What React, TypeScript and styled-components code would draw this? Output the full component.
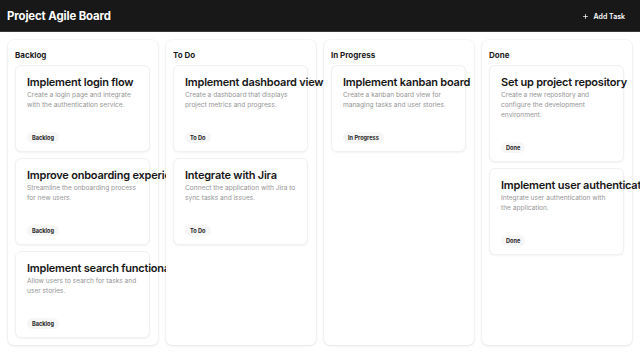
import React from 'react';
import styled, { createGlobalStyle } from 'styled-components';

const GlobalStyle = createGlobalStyle`
  html, body {
    margin: 0;
    padding: 0;
    background: #ffffff;
    font-family: Inter, "Noto Sans", sans-serif;
  }
  * {
    box-sizing: border-box;
  }
`;

const Page = styled.div`
  display: flex;
  flex-direction: column;
  height: 353px;
  width: 640px;
  overflow: hidden;
`;

const Header = styled.header`
  display: flex;
  justify-content: space-between;
  align-items: center;
  height: 32px;
  padding: 0 15px 0 7px;
  background: #181818;
  border-bottom: 1px solid #3a3a3a;
  flex-shrink: 0;
`;

const Title = styled.h1`
  margin: 0;
  font-size: 11.4px;
  font-weight: 700;
  letter-spacing: -0.01em;
  color: #ffffff;
`;

const AddButton = styled.button`
  display: flex;
  align-items: center;
  gap: 5px;
  padding: 0;
  border: none;
  background: transparent;
  color: #ffffff;
  font-family: inherit;
  font-size: 7px;
  font-weight: 600;
  margin-top: 2px;
  cursor: pointer;
`;

const Board = styled.main`
  display: flex;
  gap: 8px;
  flex: 1;
  padding: 8px;
  min-height: 0;
`;

const Column = styled.section`
  display: flex;
  flex-direction: column;
  width: 150px;
  flex-shrink: 0;
  padding: 8px 8px 8px 7px;
  background: #ffffff;
  border-radius: 6px;
  box-shadow: 0 1px 3px rgba(0, 0, 0, 0.09), 0 0 0 1px rgba(0, 0, 0, 0.025);
`;

const ColumnTitle = styled.h2`
  margin: 0 0 3px;
  font-size: 8px;
  line-height: 14px;
  font-weight: 700;
  color: #1c1c1c;
`;

const CardList = styled.div`
  display: flex;
  flex-direction: column;
  gap: 6px;
`;

const Card = styled.article`
  display: flex;
  flex-direction: column;
  align-items: flex-start;
  padding: 9px 11px 8px;
  background: #ffffff;
  border: 1px solid #f1f1f1;
  border-radius: 6px;
  box-shadow: 0 1px 2px rgba(0, 0, 0, 0.05);
`;

const CardTitle = styled.h3`
  margin: 0;
  font-size: 11px;
  line-height: 15px;
  font-weight: 600;
  letter-spacing: -0.02em;
  white-space: nowrap;
  color: #161616;
`;

const CardText = styled.p`
  margin: 0;
  max-width: 111px;
  font-size: 6.6px;
  line-height: 10px;
  color: #959595;
`;

const Badge = styled.span`
  display: inline-flex;
  align-items: center;
  height: 11px;
  margin-top: 22px;
  padding: 0 5px;
  border-radius: 6px;
  background: #f6f6f6;
  font-size: 5.6px;
  font-weight: 700;
  color: #262626;
`;

interface Task {
  title: string;
  text: string;
}

interface ColumnData {
  name: string;
  tasks: Task[];
}

const columns: ColumnData[] = [
  {
    name: 'Backlog',
    tasks: [
      { title: 'Implement login flow', text: 'Create a login page and integrate with the authentication service.' },
      { title: 'Improve onboarding experience', text: 'Streamline the onboarding process for new users.' },
      { title: 'Implement search functionality', text: 'Allow users to search for tasks and user stories.' },
    ],
  },
  {
    name: 'To Do',
    tasks: [
      { title: 'Implement dashboard view', text: 'Create a dashboard that displays project metrics and progress.' },
      { title: 'Integrate with Jira', text: 'Connect the application with Jira to sync tasks and issues.' },
    ],
  },
  {
    name: 'In Progress',
    tasks: [
      { title: 'Implement kanban board', text: 'Create a kanban board view for managing tasks and user stories.' },
    ],
  },
  {
    name: 'Done',
    tasks: [
      { title: 'Set up project repository', text: 'Create a new repository and configure the development environment.' },
      { title: 'Implement user authentication', text: 'Integrate user authentication with the application.' },
    ],
  },
];

const PlusIcon = () => (
  <svg width="7" height="7" viewBox="0 0 24 24" fill="none" stroke="currentColor" strokeWidth="2.5" strokeLinecap="round">
    <path d="M12 5v14M5 12h14" />
  </svg>
);

export default function App() {
  return (
    <Page>
      <GlobalStyle />
      <Header>
        <Title>Project Agile Board</Title>
        <AddButton>
          <PlusIcon />
          Add Task
        </AddButton>
      </Header>
      <Board>
        {columns.map((col) => (
          <Column key={col.name}>
            <ColumnTitle>{col.name}</ColumnTitle>
            <CardList>
              {col.tasks.map((task) => (
                <Card key={task.title}>
                  <CardTitle>{task.title}</CardTitle>
                  <CardText>{task.text}</CardText>
                  <Badge>{col.name}</Badge>
                </Card>
              ))}
            </CardList>
          </Column>
        ))}
      </Board>
    </Page>
  );
}
